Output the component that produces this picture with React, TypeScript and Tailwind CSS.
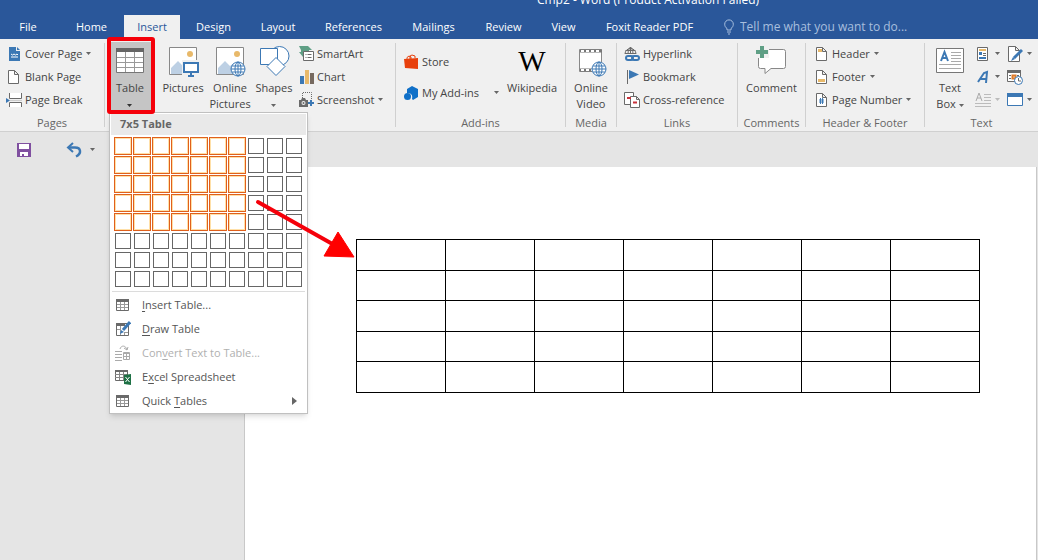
import type { ReactNode } from 'react';
import clsx from 'clsx';

const BLUE = '#3c78b4';
const GRAY = '#6a6a6a';
const SAND = '#e8b96a';

function Icon({ size = 16, children }: { size?: number; children: ReactNode }) {
  return (
    <svg width={size} height={size} viewBox={`0 0 ${size} ${size}`} fill="none" className="shrink-0" aria-hidden="true">
      {children}
    </svg>
  );
}

function Caret({ className = 'text-[#666]' }: { className?: string }) {
  return (
    <svg width="5" height="3" viewBox="0 0 5 3" className={clsx('inline-block shrink-0', className)} aria-hidden="true">
      <path d="M0 0h5L2.500 3z" fill="currentColor" />
    </svg>
  );
}

/* ---------- small icons ---------- */

const CoverPageIcon = () => (
  <Icon>
    <path d="M3 1h7v4h4v10H3z" fill={BLUE} />
    <path d="M11 1l3 3h-3z" fill={BLUE} />
    <path d="M5 8l1.500 1L8 8l1.500 1L11 8l1 1M5 11h7" stroke="#fff" />
  </Icon>
);

const PageShape = () => <path d="M3.500 1.500h6l4 4v9h-10zM9.500 1.500v4h4" fill="#fff" stroke={GRAY} />;

const BlankPageIcon = () => (
  <Icon>
    <path d="M2.500 1.500h6l4 4v9h-10zM8.500 1.500v4h4" fill="#fff" stroke={GRAY} />
  </Icon>
);

const PageBreakIcon = () => (
  <Icon>
    <path d="M3.500 1v5.500h12V1M3.500 15v-4.500h12V15" fill="#fff" stroke={GRAY} />
    <path d="M0 6l4 2.500L0 11z" fill={BLUE} />
    <path d="M4 8.500h12" stroke="#ccc" />
  </Icon>
);

const SmartArtIcon = () => (
  <Icon>
    <path d="M1 0h9l4 4h-3v2H5v5L1 6h2V4z" fill="#5f9f85" />
    <path d="M5.500 5.500h10v9h-10z" fill="#fff" stroke={GRAY} />
    <path d="M7.500 8.500h1m1 0h4M7.500 11.500h1m1 0h4" stroke={GRAY} />
  </Icon>
);

const ChartIcon = () => (
  <Icon>
    <path d="M2 7h4v8H2z" fill={BLUE} />
    <path d="M7 1h4v14H7z" fill={SAND} />
    <path d="M12 4h4v11h-4z" fill="#76695f" />
  </Icon>
);

const ScreenshotIcon = () => (
  <Icon>
    <path d="M4.500 6V.5h9V8" stroke={GRAY} strokeDasharray="1 1" />
    <path d="M1 8h2l1-2h3l1 2h2v7H1z" fill={GRAY} />
    <circle cx="5.500" cy="11" r="2" fill="#f0f0f0" />
    <circle cx="5.500" cy="11" r="1" fill={GRAY} />
    <path d="M13 8v6M10 11h6" stroke={BLUE} strokeWidth="2" />
  </Icon>
);

const StoreIcon = () => (
  <Icon>
    <path d="M1 5l14-1v11l-13-1z" fill="#e8400c" />
    <path d="M4 6V3.500L6 2l2 1v2M7 5V2l2-1 3 1v2" stroke="#e8400c" />
  </Icon>
);

const AddInsIcon = () => (
  <Icon>
    <path d="M9 1l6 3v8l-5 3-1-1c1-4-1-6-5-6V4z" fill="#1070c8" />
    <circle cx="4.500" cy="11.500" r="3.500" fill="#1070c8" />
  </Icon>
);

const HyperlinkIcon = () => (
  <Icon>
    <path d="M1 8a5.500 5.500 0 0 1 11 0M1 7.500h11M1.500 4.500h10M6.500 1v7M4 8c0-3 1-6 2.500-7C8 2 9 5 9 8" stroke={GRAY} />
    <path d="M1 9h15v6H1z" fill="#f0f0f0" />
    <rect x="2" y="10" width="7" height="4" rx="2" stroke={BLUE} strokeWidth="2" />
    <rect x="8" y="10" width="7" height="4" rx="2" stroke={BLUE} strokeWidth="2" />
  </Icon>
);

const BookmarkIcon = () => (
  <Icon>
    <path d="M3.500 1v14" stroke={GRAY} />
    <path d="M5 1l10 4.500L5 10z" fill={BLUE} />
  </Icon>
);

const CrossReferenceIcon = () => (
  <Icon>
    <path d="M.5.5h9v12h-9z" fill="#fff" stroke={GRAY} />
    <path d="M6.500 4.500h6l3 3v8h-9zM12.500 4.500v3h3" fill="#fff" stroke={GRAY} />
    <path d="M3 6h4M9 10.500h4" stroke="#c8323c" strokeWidth="2" />
  </Icon>
);

const HeaderIcon = () => (
  <Icon>
    <PageShape />
    <path d="M5 3h4v3H5z" fill={SAND} />
  </Icon>
);

const FooterIcon = () => (
  <Icon>
    <PageShape />
    <path d="M5 10h7v3H5z" fill={SAND} />
  </Icon>
);

const PageNumberIcon = () => (
  <Icon>
    <PageShape />
    <path d="M7.500 6v6M9.500 6v6M6 8h5M6 10h5" stroke={BLUE} />
  </Icon>
);

const QuickPartsIcon = () => (
  <Icon>
    <path d="M2.500 1.500h10v13h-10z" fill="#fff" stroke={GRAY} />
    <path d="M4 4h7" stroke={SAND} strokeWidth="2" />
    <path d="M4 6h3v3H4z" fill={BLUE} />
    <path d="M8 7.500h3M8 9.500h3" stroke={GRAY} />
    <path d="M4 12h7" stroke={BLUE} strokeWidth="2" />
  </Icon>
);

const WordArtIcon = () => (
  <Icon>
    <path d="M3 13l6-9 3-1-1 11M5 10h6" stroke={BLUE} strokeWidth="2" />
  </Icon>
);

const DropCapIcon = () => (
  <Icon>
    <path d="M1 9l3-8 3 8M2 6h4" stroke="#aaa" />
    <path d="M9 2.500h7M9 5.500h7M9 8.500h7M0 11.500h16M0 14.500h16" stroke="#bbb" />
  </Icon>
);

const SignatureIcon = () => (
  <Icon>
    <path d="M1.500.5h7l4 4v11h-11zM8.500.5v4h4" fill="#fff" stroke={GRAY} />
    <path d="M7 12l8-8" stroke={BLUE} strokeWidth="3" />
    <path d="M4 15l2-4 2 2z" fill={BLUE} />
  </Icon>
);

const DateTimeIcon = () => (
  <Icon>
    <path d="M.5 1.500h13v11H.5z" fill="#fff" stroke={GRAY} />
    <path d="M0 1h14v3H0z" fill={GRAY} />
    <path d="M2 6.500h2M2 9.500h2M10 6.500h2" stroke={GRAY} />
    <path d="M5.500 6.500h3v3h-3z" stroke="#e07b28" strokeWidth="2" />
    <circle cx="11.500" cy="11.500" r="4" fill="#fff" stroke={BLUE} />
    <path d="M11.500 9v3H14" stroke={GRAY} />
  </Icon>
);

const ObjectIcon = () => (
  <Icon>
    <path d="M.5 1.500h15v12H.5z" fill="#fff" stroke={BLUE} />
    <path d="M0 1h16v4H0z" fill={BLUE} />
  </Icon>
);

const GridIcon = () => (
  <Icon>
    <path d="M1.500 2.500h12v11h-12z" fill="#fff" stroke={GRAY} />
    <path d="M1 2h13v3H1z" fill={GRAY} />
    <path d="M2 7.500h11M2 10.500h11M5.500 5v8M9.500 5v8" stroke="#999" />
  </Icon>
);

const DrawTableIcon = () => (
  <Icon>
    <path d="M1.500 2.500h12v12h-12z" fill="#fff" stroke={GRAY} />
    <path d="M1 2h9v3H1z" fill={GRAY} />
    <path d="M2 8.500h4M5.500 5v9M9.500 11v3M9 11.500h4" stroke="#999" />
    <path d="M8 9l7-8" stroke={BLUE} strokeWidth="3" />
    <path d="M5 13l1-4 3 2z" fill={BLUE} />
  </Icon>
);

const ConvertIcon = () => (
  <Icon>
    <path d="M0 6.500h7M0 9.500h7M0 12.500h7M0 15.500h7" stroke="#aaa" />
    <path d="M5 4c1-4 6-4 7 1M9 3l3 2 1-3" stroke="#aaa" />
    <path d="M8.500 7.500h6v7h-6z" stroke="#aaa" />
    <path d="M9 8.500h5M9 11.500h5M11.500 9v6" stroke="#aaa" />
  </Icon>
);

const ExcelIcon = () => (
  <Icon>
    <path d="M.5 1.500h12v10H.5z" fill="#fff" stroke={GRAY} />
    <path d="M0 1h13v2H0z" fill={GRAY} />
    <path d="M0 5.500h12M0 8.500h12M4.500 3v8M8.500 3v8" stroke="#888" />
    <path d="M9 6l7-1v11l-7-1z" fill="#1e7145" />
    <path d="M10.500 8l4 5M14.500 8l-4 5" stroke="#fff" />
  </Icon>
);

/* ---------- large icons ---------- */

const TableIcon = () => (
  <Icon size={32}>
    <path d="M2.500 2.500h27v24h-27z" fill="#fff" stroke="#777" />
    <path d="M2 2h28v4H2z" fill="#666" />
    <path d="M3 11.500h26M3 16.500h26M3 21.500h26M11.500 6v20M20.500 6v20" stroke="#999" />
  </Icon>
);

const Photo = () => (
  <>
    <path d="M2.500 1.500h27v27h-27z" fill="#fff" stroke="#888" />
    <circle cx="23" cy="8" r="3" fill={SAND} />
    <path d="M4 28v-6l7-7 5 5 4-3v11z" fill="#bdd0e4" />
  </>
);

const Globe = ({ cx, cy }: { cx: number; cy: number }) => (
  <g stroke={BLUE}>
    <circle cx={cx} cy={cy} r="7" fill="#fff" />
    <ellipse cx={cx} cy={cy} rx="3" ry="7" />
    <path d={`M${cx - 7} ${cy}h14M${cx - 6} ${cy - 3}h12M${cx - 6} ${cy + 3}h12M${cx} ${cy - 7}v14`} />
  </g>
);

const PicturesIcon = () => (
  <Icon size={32}>
    <Photo />
    <path d="M15 14h17v16H15z" fill="#f0f0f0" />
    <path d="M17 17h14v9H17z" fill="#fff" stroke={BLUE} strokeWidth="2" />
    <path d="M24 27v3M21 30h6" stroke={BLUE} strokeWidth="2" />
  </Icon>
);

const OnlinePicturesIcon = () => (
  <Icon size={32}>
    <Photo />
    <Globe cx={24} cy={23} />
  </Icon>
);

const ShapesIcon = () => (
  <Icon size={32}>
    <circle cx="21.500" cy="10" r="9.500" fill="#fff" stroke={BLUE} />
    <path d="M2.500 2.500h17v16h-17z" fill="#fff" stroke={BLUE} />
    <path d="M18 11.500l9 9-9 9-9-9z" fill="#fff" stroke={BLUE} />
  </Icon>
);

const VideoIcon = () => (
  <Icon size={32}>
    <path d="M4.500 3.500h22v22h-22z" fill="#fff" stroke="#888" />
    <path d="M5 5h22M5 24h22" stroke="#777" strokeWidth="3" />
    <path d="M6 5h20M6 24h20" stroke="#fff" strokeWidth="2" strokeDasharray="3 2" />
    <Globe cx={24} cy={23} />
  </Icon>
);

const CommentIcon = () => (
  <Icon size={32}>
    <path d="M4.500 3.500h23a2 2 0 0 1 2 2v15a2 2 0 0 1-2 2H15l-6 5v-5H4.500a2 2 0 0 1-2-2v-15a2 2 0 0 1 2-2z" fill="#fff" stroke="#888" />
    <path d="M0 0h13v12H0z" fill="#f0f0f0" />
    <path d="M6 0v12M0 6h12" stroke="#5f9f85" strokeWidth="4" />
  </Icon>
);

const TextBoxIcon = () => (
  <Icon size={32}>
    <path d="M2.500 2.500h27v24h-27z" fill="#fff" stroke="#777" />
    <path d="M7 15l3.500-9L14 15M8 12h5" stroke={BLUE} strokeWidth="2" />
    <path d="M17 6.500h10M17 9.500h10M17 12.500h10M17 15.500h10M5 18.500h22M5 22.500h22" stroke="#aaa" />
  </Icon>
);

/* ---------- ribbon parts ---------- */

type SmallProps = { icon: ReactNode; label: string; caret?: boolean; tall?: boolean };

function SmallButton({ icon, label, caret, tall }: SmallProps) {
  return (
    <button type="button" className={clsx('flex items-center gap-[3px] whitespace-nowrap', tall ? 'h-[31px]' : 'h-[23px]')}>
      {icon}
      <span className="pt-[2px]">{label}</span>
      {caret && <Caret className="ml-px text-[#666]" />}
    </button>
  );
}

function IconButton({ icon, label, caret = true, disabled }: { icon: ReactNode; label: string; caret?: boolean; disabled?: boolean }) {
  return (
    <button type="button" aria-label={label} disabled={disabled} className="flex h-[23px] items-center gap-1">
      {icon}
      {caret && <Caret className={disabled ? 'text-[#bbb]' : 'text-[#666]'} />}
    </button>
  );
}

function LargeButton({ icon, className, children }: { icon: ReactNode; className?: string; children: ReactNode }) {
  return (
    <button type="button" className={clsx('flex h-[70px] shrink-0 flex-col items-center pt-1', className)}>
      {icon}
      <span className="mt-[2px] block text-center leading-4 whitespace-nowrap">{children}</span>
    </button>
  );
}

function Group({ label, className, children }: { label?: string; className: string; children: ReactNode }) {
  return (
    <section aria-label={label} className={clsx('flex flex-col', className)}>
      <div className="flex h-[69px]">{children}</div>
      {label && <div className="pt-1 text-center leading-4 whitespace-nowrap text-[#666]">{label}</div>}
    </section>
  );
}

const Separator = () => <div className="mt-px mb-1 w-px shrink-0 bg-[#d0d0d0]" />;

const tabs = [
  { name: 'Home', width: 'w-[59px]' },
  { name: 'Insert', width: 'w-[56px]' },
  { name: 'Design', width: 'w-[61px]' },
  { name: 'Layout', width: 'w-[62px]' },
  { name: 'References', width: 'w-[83px]' },
  { name: 'Mailings', width: 'w-[71px]' },
  { name: 'Review', width: 'w-[63px]' },
  { name: 'View', width: 'w-[51px]' },
  { name: 'Foxit Reader PDF', width: 'w-[115px]' },
];

const menuItems = [
  { icon: <GridIcon />, before: '', key: 'I', after: 'nsert Table...' },
  { icon: <DrawTableIcon />, before: '', key: 'D', after: 'raw Table' },
  { icon: <ConvertIcon />, before: 'Con', key: 'v', after: 'ert Text to Table...', disabled: true },
  { icon: <ExcelIcon />, before: 'E', key: 'x', after: 'cel Spreadsheet' },
  { icon: <GridIcon />, before: 'Quick ', key: 'T', after: 'ables', submenu: true },
];

const COLS = 10;
const ROWS = 8;
const picked = { cols: 7, rows: 5 };

function TableMenu() {
  return (
    <div className="absolute top-[70px] left-1 z-10 w-[199px] border border-[#c0c0c0] bg-white text-[#555] shadow-md">
      <div className="mx-px mt-px h-[21px] bg-[#e9e9e9] px-[9px] leading-5 font-bold text-[#666]">
        {picked.cols}x{picked.rows} Table
      </div>
      <div className="grid grid-cols-[repeat(10,16px)] gap-[3px] pt-[3px] pb-1 pl-[5px]">
        {Array.from({ length: COLS * ROWS }, (_, i) => {
          const on = i % COLS < picked.cols && Math.floor(i / COLS) < picked.rows;
          return (
            <button
              key={i}
              type="button"
              aria-label={`${(i % COLS) + 1}x${Math.floor(i / COLS) + 1} Table`}
              className={clsx('size-4 border', on ? 'border-[#ffe0a8] ring-1 ring-[#e0601c]' : 'border-[#666]')}
            />
          );
        })}
      </div>
      <div className="mx-[2px] mb-px h-px bg-[#dcdcdc]" />
      {menuItems.map((item) => (
        <button
          key={item.after}
          type="button"
          disabled={item.disabled}
          className="flex h-6 w-full items-center gap-[11px] pr-[10px] pl-[5px] text-left disabled:text-[#b0b0b0]"
        >
          {item.icon}
          <span className="flex-1 whitespace-pre">
            {item.before}
            <u className="underline-offset-2">{item.key}</u>
            {item.after}
          </span>
          {item.submenu && (
            <svg width="5" height="8" viewBox="0 0 5 8" aria-hidden="true">
              <path d="M0 0l5 4-5 4z" fill="#666" />
            </svg>
          )}
        </button>
      ))}
    </div>
  );
}

function Ribbon() {
  return (
    <div className="flex border-b border-[#d0d0d0] bg-[#f0f0f0] pt-[3px] text-[#444]">
      <Group label="Pages" className="w-[104px] shrink-0">
        <div className="pl-[6px]">
          <SmallButton icon={<CoverPageIcon />} label="Cover Page" caret />
          <SmallButton icon={<BlankPageIcon />} label="Blank Page" />
          <SmallButton icon={<PageBreakIcon />} label="Page Break" />
        </div>
      </Group>
      <Separator />
      <Group className="w-[290px] shrink-0">
        <div className="relative w-[50px] px-[3px]">
          <LargeButton icon={<TableIcon />} className="w-full bg-[#c5c5c5]">
            Table
            <span className="block">
              <Caret className="align-middle text-[#333]" />
            </span>
          </LargeButton>
          <TableMenu />
          {/* highlight frame round the Table button */}
          <div className="pointer-events-none absolute -top-[5px] left-[2px] z-20 h-[77px] w-12 rounded-[3px] border-4 border-[#f5000a]" />
        </div>
        <LargeButton icon={<PicturesIcon />} className="ml-1 w-12">
          Pictures
        </LargeButton>
        <LargeButton icon={<OnlinePicturesIcon />} className="w-[46px]">
          Online
          <br />
          Pictures
        </LargeButton>
        <LargeButton icon={<ShapesIcon />} className="w-[42px]">
          Shapes
          <span className="block">
            <Caret className="align-middle text-[#666]" />
          </span>
        </LargeButton>
        <div className="pl-[3px]">
          <SmallButton icon={<SmartArtIcon />} label="SmartArt" />
          <SmallButton icon={<ChartIcon />} label="Chart" />
          <SmallButton icon={<ScreenshotIcon />} label="Screenshot" caret />
        </div>
      </Group>
      <Separator />
      <Group label="Add-ins" className="w-[169px] shrink-0">
        <div className="w-[103px] pt-1 pl-[7px]">
          <SmallButton icon={<StoreIcon />} label="Store" tall />
          <div className="flex items-center justify-between">
            <SmallButton icon={<AddInsIcon />} label="My Add-ins" tall />
            <button type="button" aria-label="My Add-ins options" className="flex h-[31px] items-center">
              <Caret />
            </button>
          </div>
        </div>
        <LargeButton
          icon={<span className="h-8 font-['Liberation_Serif',serif] text-[29px] leading-[30px] text-black">W</span>}
          className="w-[66px]"
        >
          Wikipedia
        </LargeButton>
      </Group>
      <Separator />
      <Group label="Media" className="w-[50px] shrink-0">
        <LargeButton icon={<VideoIcon />} className="w-full">
          Online
          <br />
          Video
        </LargeButton>
      </Group>
      <Separator />
      <Group label="Links" className="w-[120px] shrink-0">
        <div className="pl-[7px]">
          <SmallButton icon={<HyperlinkIcon />} label="Hyperlink" />
          <SmallButton icon={<BookmarkIcon />} label="Bookmark" />
          <SmallButton icon={<CrossReferenceIcon />} label="Cross-reference" />
        </div>
      </Group>
      <Separator />
      <Group label="Comments" className="w-[67px] shrink-0">
        <LargeButton icon={<CommentIcon />} className="w-full">
          Comment
        </LargeButton>
      </Group>
      <Separator />
      <Group label="Header & Footer" className="w-[118px] shrink-0">
        <div className="pl-[7px]">
          <SmallButton icon={<HeaderIcon />} label="Header" caret />
          <SmallButton icon={<FooterIcon />} label="Footer" caret />
          <SmallButton icon={<PageNumberIcon />} label="Page Number" caret />
        </div>
      </Group>
      <Separator />
      <Group label="Text" className="min-w-[113px]">
        <LargeButton icon={<TextBoxIcon />} className="w-[50px]">
          Text
          <br />
          Box <Caret className="align-middle text-[#666]" />
        </LargeButton>
        <div className="flex gap-[7px]">
          <div>
            <IconButton icon={<QuickPartsIcon />} label="Quick Parts" />
            <IconButton icon={<WordArtIcon />} label="WordArt" />
            <IconButton icon={<DropCapIcon />} label="Drop Cap" disabled />
          </div>
          <div>
            <IconButton icon={<SignatureIcon />} label="Signature Line" />
            <IconButton icon={<DateTimeIcon />} label="Date & Time" caret={false} />
            <IconButton icon={<ObjectIcon />} label="Object" />
          </div>
        </div>
      </Group>
    </div>
  );
}

export default function App() {
  return (
    <div className="relative flex min-h-screen flex-col overflow-hidden bg-[#e5e5e5] font-['Open_Sans',sans-serif] text-[11px]">
      <header className="bg-[#2a579a] text-white">
        <div className="h-[15px] overflow-hidden pl-[258px]">
          <h1 className="-mt-2 text-center text-[12px] leading-4">Cmp2 - Word (Product Activation Failed)</h1>
        </div>
        <nav className="flex h-6 gap-[3px]">
          <button type="button" className="w-[59px] shrink-0 pr-[3px]">
            File
          </button>
          {tabs.map((tab) => (
            <button
              key={tab.name}
              type="button"
              className={clsx('shrink-0 whitespace-nowrap', tab.width, tab.name === 'Insert' && 'bg-[#f0f0f0] text-[#2a579a]')}
            >
              {tab.name}
            </button>
          ))}
          <label className="ml-[14px] flex flex-1 items-center gap-[6px] text-[#a8bfde]">
            <svg width="10" height="16" viewBox="0 0 10 16" fill="none" stroke="currentColor" className="shrink-0" aria-hidden="true">
              <path d="M3 11V9.500C1.500 8.500.7 7 .7 5.200a4.300 4.300 0 0 1 8.600 0C9.300 7 8.500 8.500 7 9.500V11zM3 13h4M4 15h2" />
            </svg>
            <input
              type="text"
              aria-label="Tell me what you want to do"
              placeholder="Tell me what you want to do..."
              className="w-full min-w-0 text-[12px] text-white placeholder:text-[#a8bfde] focus:outline-none"
            />
          </label>
        </nav>
      </header>

      <Ribbon />

      <div className="flex h-[35px] items-center pl-4">
        <button type="button" aria-label="Save">
          <Icon>
            <path d="M1 1h14v14H1z" fill="#8050a0" />
            <path d="M3 2h10v5H3zM4 10h8v4H4z" fill="#fff" />
            <path d="M6 12h2v3H6z" fill="#8050a0" />
          </Icon>
        </button>
        <button type="button" aria-label="Undo" className="ml-[34px] flex items-center gap-2">
          <Icon>
            <path d="M3 5.500h6c6 0 7 6 1 9" stroke={BLUE} strokeWidth="2.500" />
            <path d="M7 1L2 5.500 7 10" stroke={BLUE} strokeWidth="2" />
          </Icon>
          <Caret />
        </button>
      </div>

      <main className="mr-[1px] ml-[244px] flex-1 border-x border-[#c8c8c8] bg-white pt-[72px] pr-14 pl-[111px]">
        <table className="w-full table-fixed border-collapse">
          <tbody>
            {Array.from({ length: picked.rows }, (_, r) => (
              <tr key={r} className="h-[30px] odd:h-[31px]">
                {Array.from({ length: picked.cols }, (_, c) => (
                  <td key={c} className="border border-black" />
                ))}
              </tr>
            ))}
          </tbody>
        </table>
      </main>

      {/* arrow from the size picker to the inserted table */}
      <svg width="110" height="70" viewBox="0 0 110 70" className="pointer-events-none absolute top-[195px] left-[250px] z-30" aria-hidden="true">
        <path d="M8 7l78 44" stroke="#f5000a" strokeWidth="4" strokeLinecap="round" />
        <path d="M88 37l16 25-30-1z" fill="#ff0000" stroke="#ff0000" strokeLinejoin="round" />
      </svg>
    </div>
  );
}
